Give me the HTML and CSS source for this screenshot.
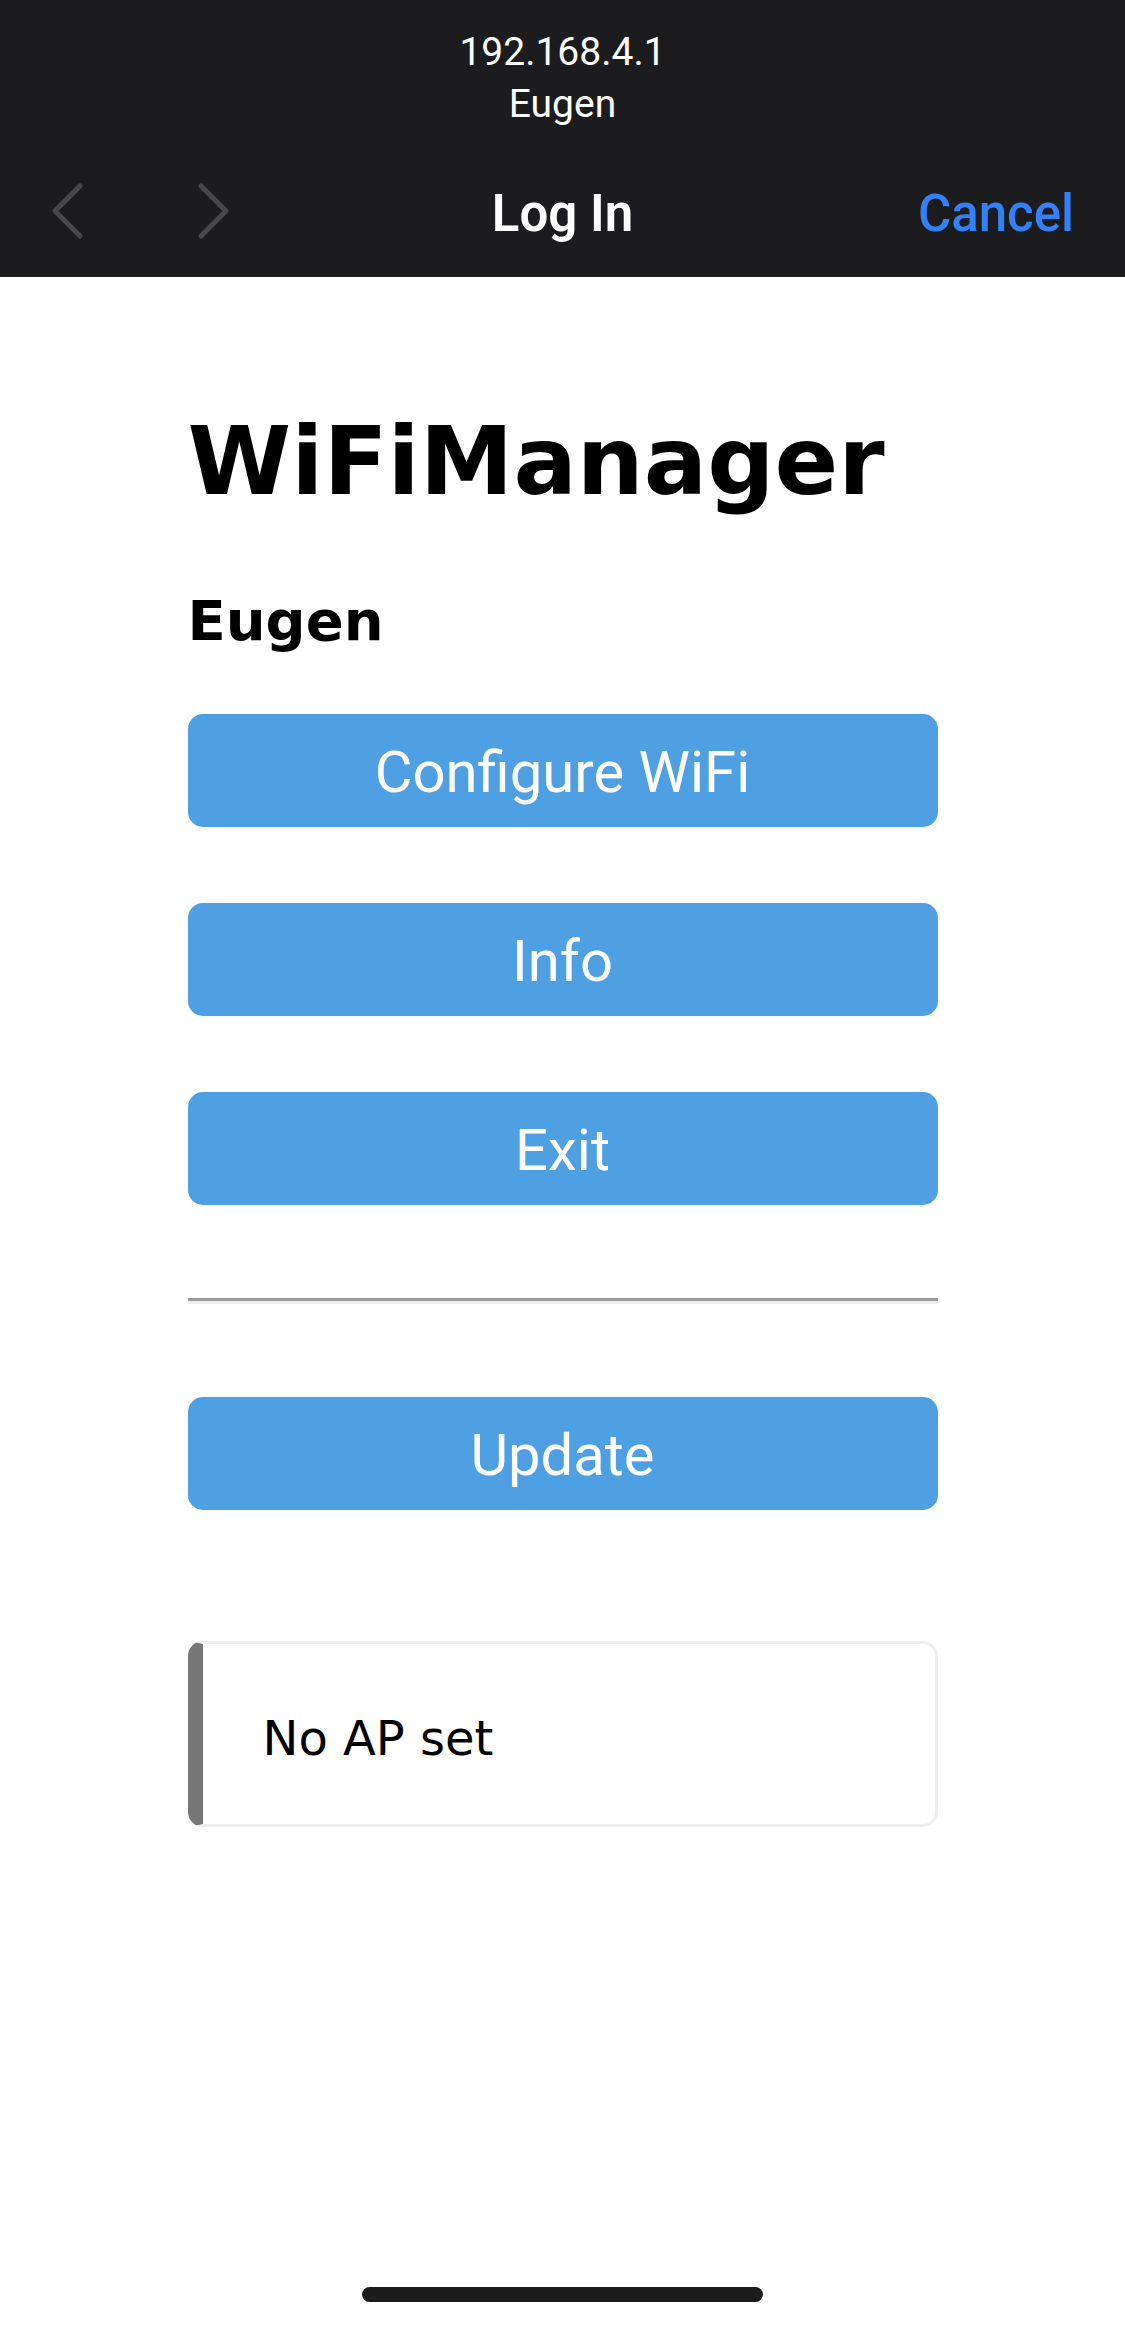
FILE: index.html
```html
<!DOCTYPE html>
<html lang="en">
<head>
<meta charset="utf-8">
<title>WiFiManager</title>
<link rel="stylesheet" href="styles.css">
</head>
<body>
<div class="screen">
  <header class="navbar">
    <div class="prompt">
      <div class="prompt-line">192.168.4.1</div>
      <div class="prompt-line">Eugen</div>
    </div>
    <div class="navrow">
      <div class="nav-left">
        <svg class="chev" width="36" height="60" viewBox="0 0 36 60" aria-hidden="true"><path d="M30 5 L5 30 L30 55"/></svg>
        <svg class="chev" width="36" height="60" viewBox="0 0 36 60" aria-hidden="true"><path d="M6 5 L31 30 L6 55"/></svg>
      </div>
      <div class="nav-title">Log In</div>
      <div class="nav-right"><span class="cancel">Cancel</span></div>
    </div>
  </header>

  <main class="page">
    <div class="wrap">
      <h1 class="title">WiFiManager</h1>
      <h3 class="subtitle">Eugen</h3>
      <button class="btn btn-first">Configure WiFi</button>
      <button class="btn">Info</button>
      <button class="btn">Exit</button>
      <hr class="rule">
      <button class="btn btn-update">Update</button>
      <div class="msg">No AP set</div>
    </div>
  </main>

  <div class="home-indicator"></div>
</div>
</body>
</html>
```

FILE: styles.css
```css
html, body {
  margin: 0;
  padding: 0;
  background: #ffffff;
}

.screen {
  min-height: 2326px;
  display: flex;
  flex-direction: column;
}

/* ---------- iOS captive portal bar ---------- */
.navbar {
  background: #1c1c1e;
  color: #ffffff;
  font-family: Roboto, "Liberation Sans", sans-serif;
  padding-top: 26px;
  padding-bottom: 23px;
}

.prompt {
  text-align: center;
}

.prompt-line {
  font-size: 39px;
  line-height: 52px;
  font-weight: 400;
}

.navrow {
  margin-top: 44px;
  height: 80px;
  display: grid;
  grid-template-columns: 1fr auto 1fr;
  align-items: center;
}

.nav-left {
  display: flex;
  align-items: center;
  gap: 109px;
  padding-left: 50px;
  margin-bottom: 6px;
}

.chev path {
  fill: none;
  stroke: #48484a;
  stroke-width: 5;
  stroke-linecap: round;
  stroke-linejoin: round;
}

.nav-title {
  font-size: 51px;
  line-height: 80px;
  font-weight: 600;
  color: #ffffff;
}

.nav-right {
  display: flex;
  justify-content: flex-end;
  padding-right: 51px;
}

.cancel {
  font-size: 51px;
  line-height: 80px;
  font-weight: 500;
  color: #3381f6;
}

/* ---------- page content ---------- */
.page {
  flex: 1;
  display: flex;
  justify-content: center;
  font-family: "DejaVu Sans", Verdana, sans-serif;
}

.wrap {
  width: 750px;
  display: flex;
  flex-direction: column;
}

.title {
  margin: 130px 0 0;
  font-size: 94px;
  font-weight: 700;
  color: #000;
  line-height: normal;
}

.subtitle {
  margin: 72px 0 0;
  font-size: 56px;
  font-weight: 700;
  color: #000;
  line-height: normal;
}

.btn {
  display: block;
  width: 100%;
  height: 113px;
  margin: 76px 0 0;
  padding: 4px 0 0;
  border: 0;
  border-radius: 15px;
  background: #4fa0e3;
  color: #ffffff;
  font-family: Roboto, "Liberation Sans", sans-serif;
  font-size: 58px;
  line-height: 109px;
  text-align: center;
}

.btn-first {
  margin-top: 61px;
}

.rule {
  margin: 93px 0 0;
  height: 0;
  border: 0;
  border-top: 3px solid #999999;
  border-bottom: 3px solid #eeeeee;
}

.btn-update {
  margin-top: 93px;
}

.msg {
  margin-top: 131px;
  border: 3px solid #eeeeee;
  border-left: 15px solid #777777;
  border-radius: 15px;
  padding: 64px 60px 56px;
  font-size: 48px;
  line-height: 60px;
  color: #000;
}

/* ---------- home indicator ---------- */
.home-indicator {
  align-self: center;
  width: 401px;
  height: 15px;
  border-radius: 8px;
  background: #1c1c1c;
  margin-bottom: 24px;
}
```
